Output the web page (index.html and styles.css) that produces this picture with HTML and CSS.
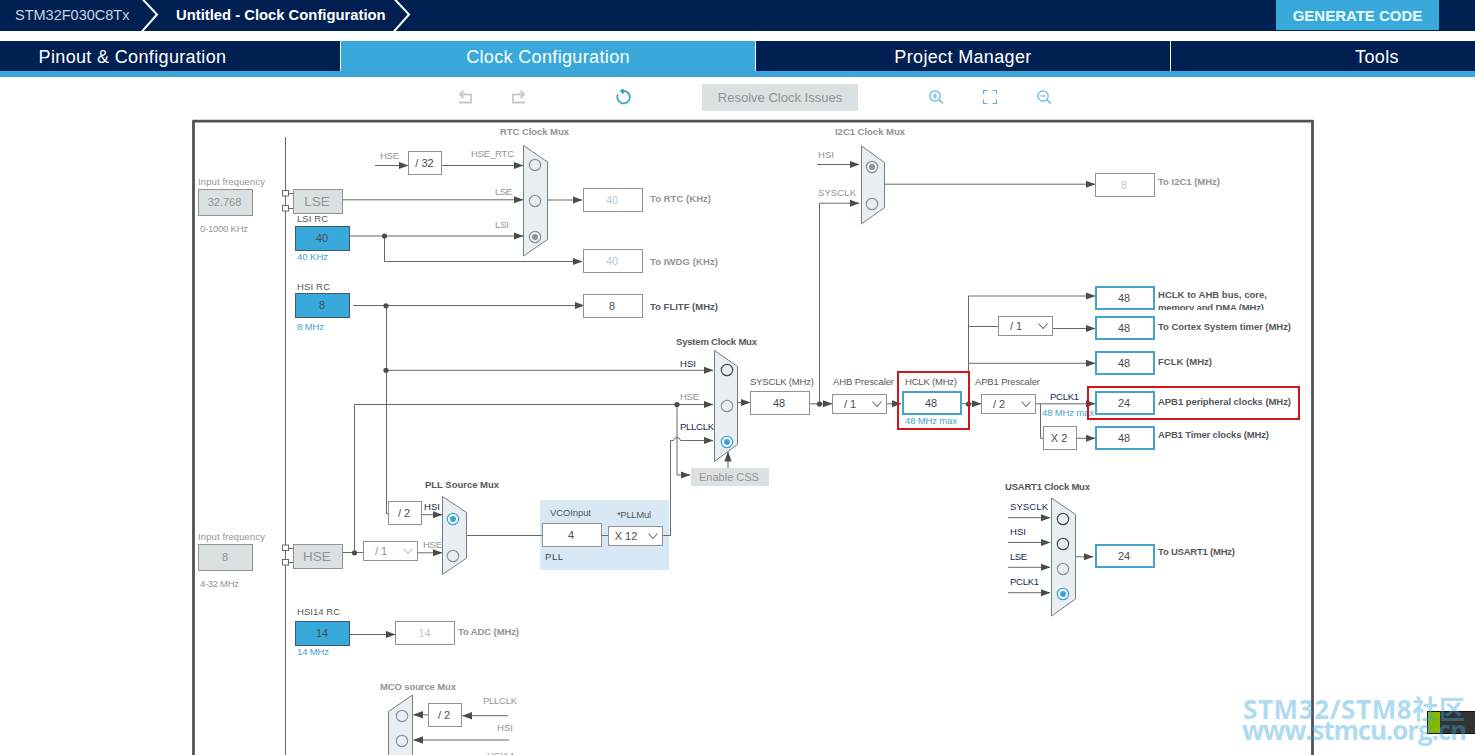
FILE: index.html
```html
<!DOCTYPE html>
<html lang="en">
<head>
    <meta charset="UTF-8" />
    <title>Clock Configuration</title>
    <link rel="stylesheet" href="styles.css">
</head>
<body>
<header class="topbar">
  <span class="chip">STM32F030C8Tx</span>
  <svg class="arrow" width="18" height="31"><path d="M1.5 -1L16 14.5L0.5 32" /></svg>
  <span class="title">Untitled - Clock Configuration</span>
  <svg class="arrow" width="18" height="31"><path d="M1.5 -1L16 14.5L0.5 32" /></svg>
  <button class="generate">GENERATE CODE</button>
</header>

<nav class="tabs">
  <a class="tab first">Pinout &amp; Configuration</a>
  <a class="tab active">Clock Configuration</a>
  <a class="tab">Project Manager</a>
  <a class="tab last">Tools</a>
</nav>

<div class="toolbar">
  <svg class="icon off" width="16" height="16"><path d="M2 13.5H14V5.5H3M6.5 2L3 5.5L6.5 9" /></svg>
  <svg class="icon off redo" width="16" height="16"><path d="M14 13.5H2V5.5H13M9.5 2L13 5.5L9.5 9" /></svg>
  <svg class="icon reset" width="16" height="16"><path d="M2 5.5A6.2 6.2 0 1 0 8 2H4.5M7.5 0L5 2L7.5 4.5" /></svg>
  <button class="resolve">Resolve Clock Issues</button>
  <svg class="icon thin" width="16" height="16"><circle cx="7" cy="7" r="5.2" /><path d="M11 11L15 14.5M4.5 7H9.5M7 4.5V9.5" /></svg>
  <svg class="icon thin fit" width="16" height="16"><path d="M1.5 5V1.5H5.5M10.5 1.5H14.5V5M14.5 10.5V14.5H10.5M5.5 14.5H1.5V10.5" /></svg>
  <svg class="icon thin out" width="16" height="16"><circle cx="7" cy="7" r="5.2" /><path d="M11 11L15 14.5M4.5 7H9.5" /></svg>
</div>

<svg class="diagram" width="1475" height="637" viewBox="0 118 1475 637">
  <defs>
    <marker id="head" markerUnits="userSpaceOnUse" markerWidth="10" markerHeight="8" refX="9.5" refY="4" orient="auto">
      <path class="head" d="M0 0.3L10 4L0 7.7Z" />
    </marker>
  </defs>

  <path class="frame" d="M193.5 755V121.2H1312.5V755" />

  <!-- PLL block -->
  <rect class="pll" x="540" y="500" width="129" height="70" />

  <!-- wires without an arrow -->
  <g class="wire">
    <path d="M285.5 137V755M288 193.5H293M288 208.5H293M288 548.5H293M288 562.5H293" />
    <path d="M386.5 305.5V513.5H388M343 552.5H363M354.5 552.5V404.5" />
    <path d="M466 535.5H542M602 535.5H608M663 535.5H670.5" />
    <path d="M968.5 404V296M968.5 326.5H998" />
  </g>

  <!-- wires with an arrow -->
  <g class="wire to">
    <path d="M375 165.5H408" />
    <path d="M442 165.5H523" />
    <path d="M343 199.8H523" />
    <path d="M350 236H523" />
    <path d="M384.5 236V261.5H582" />
    <path d="M547 200H582" />
    <path d="M353 305.5H584" />
    <path d="M817 164.5H859" />
    <path d="M819.5 404V203.2H859" />
    <path d="M885 184.2H1095" />
    <path d="M386 370.3H713" />
    <path d="M354.5 404.5H713" />
    <path d="M670.5 536V440.5H673.5Q674 437.5 677 437.5T680.5 440.5H713" />
    <path d="M677 404V475H690" />
    <path d="M728 468V452" />
    <path d="M738 402.5H750" />
    <path d="M810 403.8H832" />
    <path d="M887 403.8H901" />
    <path d="M962 403.8H981" />
    <path d="M1036 403.8H1095" />
    <path d="M1040.5 404V438.3H1043M1076 438.3H1095" />
    <path d="M968.5 296H1095" />
    <path d="M1053 328.5H1095" />
    <path d="M968.5 363.3H1095" />
    <path d="M422 514.7H442" />
    <path d="M418 552.8H442" />
    <path d="M350 634.5H395" />
    <path d="M429 714.8H413.5" />
    <path d="M508 715.7H462.5" />
    <path d="M509 740H413.5" />
    <path d="M1008 517.7H1050" />
    <path d="M1008 542.5H1050" />
    <path d="M1008 567.3H1050" />
    <path d="M1008 592.7H1050" />
    <path d="M1076 556.8H1093" />
  </g>

  <g class="dot">
    <circle cx="384.5" cy="236" r="2.6" />
    <circle cx="386" cy="305.8" r="2.6" />
    <circle cx="386" cy="370.3" r="2.6" />
    <circle cx="354.5" cy="552.8" r="2.6" />
    <circle cx="677" cy="404.5" r="2.6" />
    <circle cx="819.5" cy="404" r="2.6" />
    <circle cx="968.5" cy="404" r="2.6" />
  </g>

  <!-- oscillator pins -->
  <g class="pin">
    <rect x="282.5" y="190.5" width="6" height="5.5" />
    <rect x="282.5" y="205.5" width="6" height="5.5" />
    <rect x="282.5" y="545" width="6" height="5.5" />
    <rect x="282.5" y="559.5" width="6" height="5.5" />
  </g>

  <!-- muxes -->
  <g class="mux">
    <path d="M523.5 145.5L547.5 162V239.5L523.5 256Z" />
    <path d="M861.5 146L884.5 162.5V207.5L861.5 224Z" />
    <path d="M714.5 350.5L737.5 366.5V444.5L714.5 461.5Z" />
    <path d="M442.5 496.5L466.5 512.5V558L442.5 574.5Z" />
    <path d="M1051.5 498L1075.5 514.5V599L1051.5 616Z" />
    <path d="M388.5 756V711.5L412.5 695V756" />
  </g>
  <g class="radio off">
    <circle cx="535" cy="165" r="5.7" />
    <circle cx="535" cy="201" r="5.7" />
    <circle cx="535" cy="237" r="5.7" /><circle class="fill" cx="535" cy="237" r="3" />
    <circle cx="872" cy="167" r="5.7" /><circle class="fill" cx="872" cy="167" r="3" />
    <circle cx="872" cy="204" r="5.7" />
    <circle cx="727" cy="406" r="5.7" />
    <circle cx="453" cy="556" r="5.7" />
    <circle cx="1063" cy="569" r="5.7" />
    <circle cx="402" cy="716" r="5.7" />
    <circle cx="402" cy="741" r="5.7" />
  </g>
  <g class="radio">
    <circle cx="727" cy="370" r="5.7" />
    <circle cx="1063" cy="519" r="5.7" />
    <circle cx="1063" cy="544" r="5.7" />
  </g>
  <g class="radio on">
    <circle cx="727" cy="442" r="5.7" /><circle class="fill" cx="727" cy="442" r="3" />
    <circle cx="453" cy="519" r="5.7" /><circle class="fill" cx="453" cy="519" r="3" />
    <circle cx="1063" cy="594" r="5.7" /><circle class="fill" cx="1063" cy="594" r="3" />
  </g>

  <!-- boxes -->
  <g class="box gray">
    <rect x="198.5" y="189.5" width="54" height="26" />
    <rect x="198.5" y="544.5" width="54" height="26" />
    <rect x="293.5" y="189.5" width="49" height="24" />
    <rect x="293.5" y="544.5" width="49" height="24" />
  </g>
  <rect class="css" x="691" y="468" width="78" height="18" />
  <g class="box blue">
    <rect x="295.5" y="226.5" width="54" height="24" />
    <rect x="295.5" y="293.5" width="54" height="24" />
    <rect x="295.5" y="621.5" width="54" height="24" />
  </g>
  <g class="box">
    <rect x="408.5" y="151.5" width="33" height="23" />
    <rect x="583.5" y="188.5" width="59" height="23" />
    <rect x="583.5" y="249.5" width="59" height="23" />
    <rect x="583.5" y="294.5" width="59" height="23" />
    <rect x="1095.5" y="173.5" width="59" height="23" />
    <rect x="750.5" y="391.5" width="59" height="23" />
    <rect x="832.5" y="394.5" width="54" height="19" />
    <rect x="981.5" y="394.5" width="54" height="19" />
    <rect x="998.5" y="316.5" width="54" height="19" />
    <rect x="1043.5" y="426.5" width="33" height="23" />
    <rect x="388.5" y="501.5" width="33" height="23" />
    <rect x="363.5" y="541.5" width="54" height="19" />
    <rect x="542.5" y="523.5" width="59" height="23" />
    <rect x="608.5" y="526.5" width="54" height="19" />
    <rect x="395.5" y="621.5" width="59" height="23" />
    <rect x="428.5" y="703.5" width="33" height="23" />
  </g>
  <g class="box out">
    <rect x="903" y="392" width="58" height="22" />
    <rect x="1096" y="287" width="58" height="22" />
    <rect x="1096" y="317" width="58" height="22" />
    <rect x="1096" y="352" width="58" height="22" />
    <rect x="1096" y="392" width="58" height="22" />
    <rect x="1096" y="427" width="58" height="22" />
    <rect x="1096" y="545" width="58" height="22" />
  </g>
  <g class="chevron">
    <path d="M872.5 401.5L877 406.5L881.5 401.5" />
    <path d="M1021.5 401.5L1026 406.5L1030.5 401.5" />
    <path d="M1038.5 323.5L1043 328.5L1047.5 323.5" />
    <path d="M648.5 533.5L653 538.5L657.5 533.5" />
    <path class="off" d="M403.5 548.5L408 553.5L412.5 548.5" />
  </g>

  <!-- values -->
  <g class="value">
    <text x="424.5" y="167">/ 32</text>
    <text x="612" y="310">8</text>
    <text x="779" y="407">48</text>
    <text x="850" y="408">/ 1</text>
    <text x="931" y="407">48</text>
    <text x="999" y="408">/ 2</text>
    <text x="1016" y="330">/ 1</text>
    <text x="1059" y="442">X 2</text>
    <text x="1124" y="302">48</text>
    <text x="1124" y="332">48</text>
    <text x="1124" y="367">48</text>
    <text x="1124" y="407">24</text>
    <text x="1124" y="442">48</text>
    <text x="1124" y="560">24</text>
    <text x="404" y="517">/ 2</text>
    <text x="571" y="539">4</text>
    <text x="626" y="540">X 12</text>
    <text x="444" y="719">/ 2</text>
    <text x="322" y="242">40</text>
    <text x="322" y="309">8</text>
    <text x="322" y="637">14</text>
  </g>
  <g class="value off">
    <text x="224.5" y="206">32.768</text>
    <text x="225" y="561">8</text>
    <text x="381" y="555">/ 1</text>
    <text x="729" y="481">Enable CSS</text>
    <text class="osc" x="317" y="206">LSE</text>
    <text class="osc" x="317" y="561">HSE</text>
  </g>
  <g class="value pale">
    <text x="612" y="204">40</text>
    <text x="612" y="265">40</text>
    <text x="1124" y="189">8</text>
    <text x="424.5" y="637">14</text>
  </g>

  <!-- labels -->
  <g class="label off">
    <text x="198" y="185" textLength="67">Input frequency</text>
    <text x="200" y="232" textLength="48">0-1000 KHz</text>
    <text x="198" y="540" textLength="67">Input frequency</text>
    <text x="200" y="587" textLength="39">4-32 MHz</text>
    <text x="380" y="159" textLength="19">HSE</text>
    <text x="471" y="157" textLength="43">HSE_RTC</text>
    <text x="495" y="195" textLength="17">LSE</text>
    <text x="495" y="228" textLength="14">LSI</text>
    <text x="818" y="158" textLength="16">HSI</text>
    <text x="818" y="196" textLength="38">SYSCLK</text>
    <text x="680" y="400" textLength="19">HSE</text>
    <text x="423" y="548" textLength="19">HSE</text>
    <text x="483" y="704" textLength="34">PLLCLK</text>
    <text x="497" y="731" textLength="16">HSI</text>
    <text x="487" y="759" textLength="27">HSI14</text>
  </g>
  <g class="label">
    <text x="297" y="222" textLength="31">LSI RC</text>
    <text x="297" y="290" textLength="33">HSI RC</text>
    <text x="297" y="615" textLength="43">HSI14 RC</text>
    <text x="750" y="385" textLength="64">SYSCLK (MHz)</text>
    <text x="833" y="385" textLength="61">AHB Prescaler</text>
    <text x="905" y="385" textLength="52">HCLK (MHz)</text>
    <text x="975" y="385" textLength="65">APB1 Prescaler</text>
    <text x="550" y="516" textLength="41">VCOInput</text>
    <text x="617" y="518" textLength="34">*PLLMul</text>
    <text class="dark" x="545" y="560" textLength="18">PLL</text>
  </g>
  <g class="label navy">
    <text x="680" y="367" textLength="16">HSI</text>
    <text x="680" y="430" textLength="34">PLLCLK</text>
    <text x="424" y="510" textLength="16">HSI</text>
    <text x="1050" y="400" textLength="29">PCLK1</text>
    <text x="1010" y="510" textLength="38">SYSCLK</text>
    <text x="1010" y="535" textLength="16">HSI</text>
    <text x="1010" y="560" textLength="17">LSE</text>
    <text x="1010" y="585" textLength="29">PCLK1</text>
  </g>
  <g class="label sky">
    <text x="297" y="260" textLength="31">40 KHz</text>
    <text x="297" y="330" textLength="27">8 MHz</text>
    <text x="297" y="655" textLength="32">14 MHz</text>
    <text x="905" y="424" textLength="52">48 MHz max</text>
    <text x="1042" y="416" textLength="52">48 MHz max</text>
  </g>
  <g class="label bold off">
    <text x="500" y="135" textLength="69">RTC Clock Mux</text>
    <text x="835" y="135" textLength="70">I2C1 Clock Mux</text>
    <text x="650" y="202" textLength="61">To RTC (KHz)</text>
    <text x="650" y="265" textLength="68">To IWDG (KHz)</text>
    <text x="1158" y="185" textLength="62">To I2C1 (MHz)</text>
    <text x="458" y="635" textLength="61">To ADC (MHz)</text>
    <text x="380" y="690" textLength="76">MCO source Mux</text>
  </g>
  <g class="label bold">
    <text x="650" y="310" textLength="68">To FLITF (MHz)</text>
    <text x="676" y="345" textLength="81">System Clock Mux</text>
    <text x="425" y="488" textLength="74">PLL Source Mux</text>
    <text x="1005" y="490" textLength="85">USART1 Clock Mux</text>
    <text x="1158" y="298" textLength="109">HCLK to AHB bus, core,</text>
    <text class="cut" x="1158" y="311" textLength="106">memory and DMA (MHz)</text>
    <text x="1158" y="330" textLength="133">To Cortex System timer (MHz)</text>
    <text x="1158" y="365" textLength="54">FCLK (MHz)</text>
    <text x="1158" y="405" textLength="133">APB1 peripheral clocks (MHz)</text>
    <text x="1158" y="438" textLength="111">APB1 Timer clocks (MHz)</text>
    <text x="1158" y="555" textLength="77">To USART1 (MHz)</text>
  </g>

  <!-- highlights -->
  <rect class="mark" x="898" y="372" width="71" height="57" />
  <rect class="mark" x="1088" y="387" width="211" height="32" />

  <!-- progress indicator and site mark -->
  <rect class="meter" x="1427" y="711" width="48" height="23" />
  <rect class="body" x="1428" y="712" width="47" height="21" />
  <rect class="level" x="1428" y="712" width="12" height="21" />
  <g class="site">
    <text x="1243" y="719" textLength="222">STM32/STM8社区</text>
    <text x="1242" y="740" textLength="225">www.stmcu.org.cn</text>
  </g>
</svg>
</body>
</html>
```
FILE: styles.css
```css
body {
    margin: 0;
    height: 755px;
    overflow: hidden;
    background-color: #fff;
    font-family: "Liberation Sans", Arial, sans-serif;
}
button {
    border: none;
    padding: 0;
    font-family: inherit;
}
.topbar {
    display: flex;
    height: 31px;
    background-color: #002052;
    color: #fff;
    line-height: 30px;
}
.chip {
    width: 126px;
    padding-left: 15px;
    font-size: 14.5px;
    color: #c9d3e2;
}
.arrow path {
    fill: none;
    stroke: #fff;
    stroke-width: 2;
}
.title {
    width: 217px;
    padding-left: 17px;
    font-size: 14.8px;
    font-weight: bold;
    white-space: nowrap;
}
.generate {
    width: 163px;
    height: 30px;
    margin-left: auto;
    margin-right: 36px;
    background-color: #39a9dc;
    color: #e8fbff;
    font-size: 15px;
    font-weight: bold;
}
.tabs {
    display: grid;
    grid-template-columns: 340px 415px 415px 305px;
    margin-top: 10px;
    border-bottom: 6px solid #3fa4d8;
}
.tab {
    box-sizing: border-box;
    height: 30px;
    border-left: 1px solid #fff;
    background-color: #002052;
    color: #fff;
    font-size: 18px;
    letter-spacing: 0.35px;
    line-height: 32px;
    text-align: center;
}
.active {
    background-color: #39a9dc;
}
.first {
    padding-right: 75px;
    border-left: none;
}
.last {
    padding-left: 108px;
}
.toolbar {
    display: flex;
    align-items: center;
    height: 41px;
    padding-left: 457px;
}
.icon {
    fill: none;
    stroke: #39a2d4;
    stroke-width: 1.8;
    margin-bottom: 2px;
}
.icon.off {
    stroke: #c6c9cb;
}
.icon.thin {
    stroke: #5fb3da;
    stroke-width: 1.2;
}
.redo {
    margin-left: 38px;
}
.reset {
    margin-left: 89px;
}
.resolve {
    width: 156px;
    height: 27px;
    margin-left: 70px;
    margin-right: 70px;
    background-color: #dbe0e3;
    color: #8d9498;
    font-size: 13px;
}
.fit, .out {
    margin-left: 38px;
}
.diagram {
    display: block;
    overflow: hidden;
}
.frame {
    fill: none;
    stroke: #505456;
    stroke-width: 2.8;
    stroke-linejoin: round;
}
.pll {
    fill: #d9e8f5;
}
.wire {
    fill: none;
    stroke: #66696b;
}
.to path {
    marker-end: url(#head);
}
.head {
    fill: #4a4d4f;
    stroke: none;
}
.dot {
    fill: #4a4d4f;
}
.pin {
    fill: #fff;
    stroke: #66696b;
}
.mux {
    fill: #e9eef2;
    stroke: #777c80;
}
.radio {
    fill: none;
    stroke: #4a4d4f;
    stroke-width: 1.2;
}
.radio.off {
    stroke: #8f9598;
}
.radio.on {
    fill: #fff;
    stroke: #3fa3d3;
}
.radio .fill {
    fill: #8f9598;
    stroke: none;
}
.radio.on .fill {
    fill: #3fa3d3;
}
.box {
    fill: #fff;
    stroke: #8e9395;
}
.box.gray {
    fill: #dbe0e3;
}
.box.blue {
    fill: #39a9dc;
    stroke: #3f5b6b;
}
.box.out {
    margin: 0;
    stroke: #45a3cb;
    stroke-width: 2;
}
.css {
    fill: #dbe0e3;
}
.chevron {
    fill: none;
    stroke: #66696b;
    stroke-width: 1.1;
}
.chevron .off {
    stroke: #b4b8ba;
}
.value {
    fill: #4a4d4f;
    font-size: 11px;
    text-anchor: middle;
}
.value.off {
    fill: #8f9598;
}
.value.pale {
    fill: #b5c9da;
}
.value .osc {
    font-size: 13.5px;
}
.label {
    fill: #55585b;
    font-size: 9.5px;
}
.label.off {
    fill: #919496;
}
.label.navy {
    fill: #14284f;
}
.label.sky {
    fill: #3fa3d3;
}
.dark {
    fill: #33424f;
}
.bold {
    font-weight: bold;
}
/* second line of the label runs out of its box */
.cut {
    clip-path: inset(0 0 3px 0);
}
.mark {
    fill: none;
    stroke: #cf1719;
    stroke-width: 2;
}
.meter {
    fill: #111;
}
.meter + .body {
    fill: #333;
}
.level {
    fill: #86b800;
}
.site {
    fill: #3aa8dc;
    opacity: 0.4;
    font-family: "Open Sans", "Noto Sans CJK SC", sans-serif;
    font-size: 26px;
    font-weight: bold;
}
```
